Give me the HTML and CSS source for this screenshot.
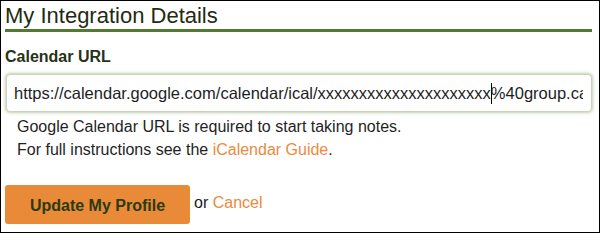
FILE: index.html
```html
<!DOCTYPE html>
<html lang="en">
<head>
<meta charset="utf-8">
<title>My Integration Details</title>
<link rel="stylesheet" href="styles.css">
</head>
<body>
<div class="frame">
  <div class="panel">
    <h2 class="title">My Integration Details</h2>
    <label class="field-label">Calendar URL</label>
    <div class="url-input">
      <span class="url-text">https://calendar.google.com/calendar/ical/xxxxxxxxxxxxxxxxxxxxx<span class="caret"></span>%40group.ca</span>
    </div>
    <div class="help">
      <p>Google Calendar URL is required to start taking notes.</p>
      <p>For full instructions see the <a href="#" class="link">iCalendar Guide</a>.</p>
    </div>
    <div class="actions">
      <button class="btn" type="button">Update My Profile</button>
      <span class="or">or <a href="#" class="link">Cancel</a></span>
    </div>
  </div>
</div>
</body>
</html>
```
FILE: styles.css
```css
html, body {
  margin: 0;
  padding: 0;
  background: #fff;
}

.frame {
  width: 600px;
  height: 233px;
  box-sizing: border-box;
  border: 1px solid #000;
  overflow: hidden;
  font-family: "Liberation Sans", Arial, sans-serif;
}

.panel {
  padding: 2px 7px 0 4px;
}

.title {
  margin: 0;
  font-size: 22px;
  line-height: 26px;
  font-weight: normal;
  color: #1f2b12;
  border-bottom: 3px solid #527a34;
}

.field-label {
  display: block;
  margin-top: 15px;
  font-size: 16px;
  line-height: 20px;
  font-weight: bold;
  color: #263318;
}

.url-input {
  margin: 7px 0 0 1px;
  height: 38px;
  box-sizing: border-box;
  border: 1px solid #c9d4bb;
  border-radius: 4px;
  box-shadow: 0 0 3px 1px rgba(120, 150, 90, 0.45);
  padding: 0 8px 0 7px;
  display: flex;
  align-items: center;
  background: #fff;
}

.url-text {
  display: block;
  overflow: hidden;
  white-space: nowrap;
  font-size: 16.5px;
  line-height: 22px;
  color: #1e1e1e;
}

.caret {
  display: inline-block;
  width: 1px;
  height: 21px;
  margin-right: -1px;
  background: #000;
  vertical-align: -5px;
}

.help {
  margin-top: 3px;
  padding-left: 12px;
  font-size: 16px;
  line-height: 23px;
  color: #1f1f24;
}

.help p {
  margin: 0;
}

.link {
  color: #ec8a3e;
  text-decoration: none;
}

.actions {
  margin-top: 24px;
  display: flex;
  align-items: center;
}

.btn {
  width: 185px;
  height: 39px;
  border: none;
  border-radius: 3px;
  background: #e88a38;
  color: #2b3a10;
  font-family: "Liberation Sans", Arial, sans-serif;
  font-size: 16px;
  font-weight: bold;
  padding: 2px 0 0;
  cursor: pointer;
}

.or {
  margin-left: 4px;
  font-size: 16px;
  color: #1a1a1a;
  margin-top: -3px;
}
```
